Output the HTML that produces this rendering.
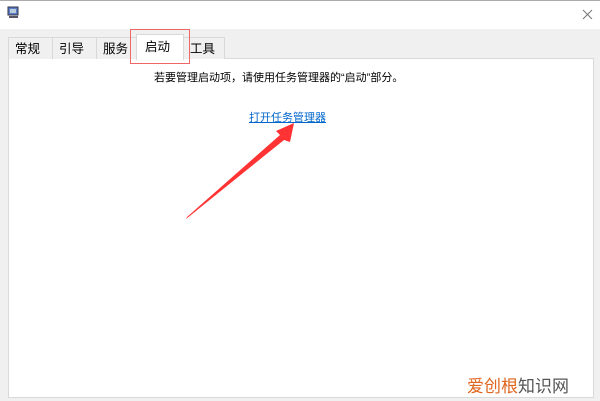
<!DOCTYPE html>
<html><head><meta charset="utf-8"><style>
body{margin:0;width:600px;height:401px;background:#f0f0f0;position:relative;overflow:hidden;font-family:"Liberation Sans","Noto Sans CJK SC",sans-serif;font-size:12px;color:#000}
.title{position:absolute;left:0;top:0;width:600px;height:28px;background:#fff;border-top:1px solid #aaa}
.tab{position:absolute;top:37px;height:22px;border:1px solid #d9d9d9;border-bottom:none;background:#f0f0f0;line-height:22px;padding-left:6px;box-sizing:border-box;font-size:12.5px}
.panel{position:absolute;left:8px;top:58px;width:586px;height:340px;background:#fff;border:1px solid #d9d9d9;box-sizing:border-box}
</style></head><body>
<div class="title">
<svg style="position:absolute;left:7px;top:5px" width="12" height="13"><rect x="1" y="1" width="10" height="8" fill="#5a7ec8" stroke="#334"/><rect x="3" y="3" width="6" height="4" fill="#bcd"/><rect x="2" y="10" width="9" height="2" fill="#556"/></svg>
<svg style="position:absolute;left:582px;top:8px" width="11" height="11"><path d="M1 1L10 10M10 1L1 10" stroke="#777" stroke-width="1"/></svg>
</div>
<div class="panel"></div>
<div class="tab" style="left:8px;width:45px">常规</div>
<div class="tab" style="left:52px;width:45px">引导</div>
<div class="tab" style="left:96px;width:43px">服务</div>
<div class="tab" style="left:183px;width:42px">工具</div>
<div class="tab" style="left:136px;top:34px;height:26px;width:48px;background:#fff;padding-left:8px;line-height:24px">启动</div>
<div style="position:absolute;left:130px;top:29px;width:60px;height:35px;border:1px solid #e66;box-sizing:border-box"></div>
<div style="position:absolute;left:154px;top:69px;font-size:11px">若要管理启动项，请使用任务管理器的“启动”部分。</div>
<div style="position:absolute;left:249px;top:109px;font-size:11px;color:#0066cc;text-decoration:underline">打开任务管理器</div>
<svg style="position:absolute;left:0;top:0" width="600" height="401"><polygon points="186,219 284,140 290,142 294,123 276,131 280,135 187,217" fill="#f33"/></svg>
<div style="position:absolute;left:467px;top:372px;font-size:17px;color:#555"><span style="color:#e0651e">爱创根</span>知识网</div>
</body></html>
